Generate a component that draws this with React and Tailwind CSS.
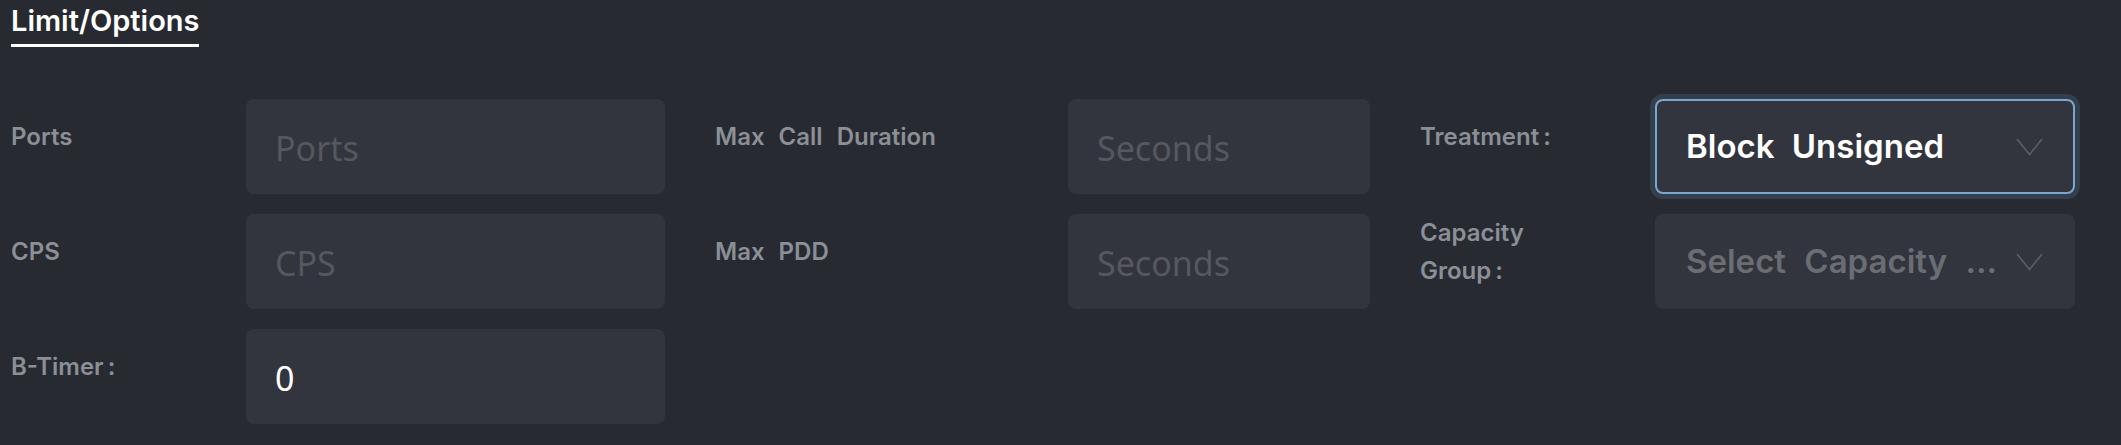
import React from "react";

const labelCls =
  "flex items-center h-[75px] shrink-0 text-[24px] font-semibold text-[#8b8f97] leading-[38px] [word-spacing:8px] font-['Inter','Noto_Sans',sans-serif]";

const inputCls =
  "h-[95px] shrink-0 rounded-lg bg-[#32353e] pl-[29px] pr-4 pt-[3px] text-[34px] text-white placeholder:text-[#55585e] outline-none border-0 font-['Noto_Sans','Open_Sans',sans-serif]";

function Chevron() {
  return (
    <svg width="27" height="18" viewBox="0 0 27 18" fill="none" className="shrink-0">
      <polyline points="1,1 13.5,16.5 26,1" stroke="#5b5f66" strokeWidth="1.6" fill="none" />
    </svg>
  );
}

function Row({ label, labelW, children }) {
  return (
    <div className="flex h-[95px]">
      <div className={`${labelCls} ${labelW}`}>{label}</div>
      {children}
    </div>
  );
}

export default function App() {
  return (
    <div className="min-h-[445px] w-full bg-[#272a30] pl-[11px] font-['Inter','Noto_Sans',sans-serif]">
      <div className="pt-[6px]">
        <div className="inline-block border-b-[3px] border-white pb-[9px] text-[29px] leading-[29px] font-semibold text-white">
          Limit/Options
        </div>
      </div>

      <div className="mt-[52px] flex items-start gap-[50px]">
        {/* Column 1 */}
        <div className="flex flex-col gap-[20px]">
          <Row label="Ports" labelW="w-[235px]">
            <input className={`${inputCls} w-[419px]`} placeholder="Ports" />
          </Row>
          <Row label="CPS" labelW="w-[235px]">
            <input className={`${inputCls} w-[419px]`} placeholder="CPS" />
          </Row>
          <Row
            label={
              <span>
                B-Timer<span className="ml-[4px]">:</span>
              </span>
            }
            labelW="w-[235px]"
          >
            <input className={`${inputCls} w-[419px]`} defaultValue="0" />
          </Row>
        </div>

        {/* Column 2 */}
        <div className="flex flex-col gap-[20px]">
          <Row label="Max Call Duration" labelW="w-[353px]">
            <input className={`${inputCls} w-[302px]`} placeholder="Seconds" />
          </Row>
          <Row label="Max PDD" labelW="w-[353px]">
            <input className={`${inputCls} w-[302px]`} placeholder="Seconds" />
          </Row>
        </div>

        {/* Column 3 */}
        <div className="flex flex-col gap-[20px]">
          <Row
            label={
              <span>
                Treatment<span className="ml-[4px]">:</span>
              </span>
            }
            labelW="w-[235px]"
          >
            <div className="flex h-[95px] w-[420px] items-center justify-between rounded-lg border-2 border-[#7aa6cf] bg-[#32353e] pl-[29px] pr-[30px] ring-[5px] ring-[#343f4d]">
              <span className="text-[33px] font-semibold text-white [word-spacing:9px]">Block Unsigned</span>
              <Chevron />
            </div>
          </Row>
          <Row
            label={
              <span>
                Capacity
                <br />
                Group<span className="ml-[4px]">:</span>
              </span>
            }
            labelW="w-[235px]"
          >
            <div className="flex h-[95px] w-[420px] items-center justify-between rounded-lg bg-[#32353e] pl-[31px] pr-[32px]">
              <span className="text-[33px] font-semibold text-[#6a6d73] [word-spacing:10px] whitespace-nowrap">
                Select Capacity ...
              </span>
              <Chevron />
            </div>
          </Row>
        </div>
      </div>
    </div>
  );
}
